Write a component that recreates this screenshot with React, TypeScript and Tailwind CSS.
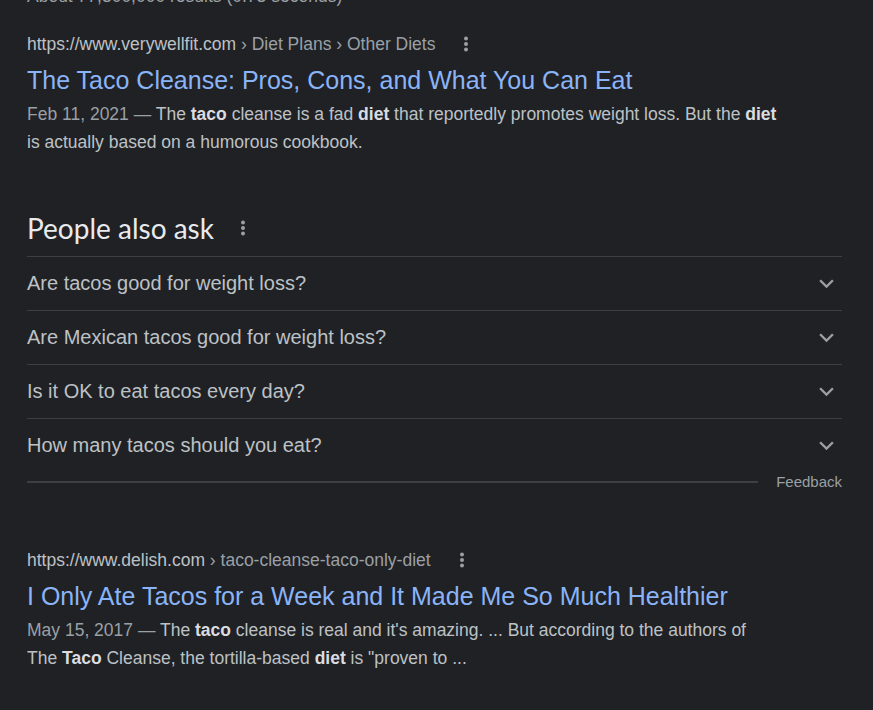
import type { ReactNode } from 'react'

const sans = { fontFamily: '"Liberation Sans", Arial, sans-serif' }

function MoreVert() {
	return (
		<svg width="6" height="16" viewBox="0 0 6 16" className="shrink-0 text-[#9aa0a6]" aria-hidden="true">
			<circle cx="3" cy="2.5" r="2" fill="currentColor" />
			<circle cx="3" cy="8" r="2" fill="currentColor" />
			<circle cx="3" cy="13.5" r="2" fill="currentColor" />
		</svg>
	)
}

function ExpandMore() {
	return (
		<svg width="29" height="29" viewBox="0 0 24 24" className="shrink-0 text-[#9aa0a6]" aria-hidden="true">
			<path fill="currentColor" d="M16.59 8.59L12 13.17 7.41 8.59 6 10l6 6 6-6z" />
		</svg>
	)
}

type ResultProps = {
	site: string
	crumbs: string
	title: string
	lines: ReactNode[]
}

function Result({ site, crumbs, title, lines }: ResultProps) {
	return (
		<div>
			<div className="flex h-[28px] items-center text-[17.5px] whitespace-nowrap">
				<span className="text-[#bdc1c6]">{site}</span>
				<span className="text-[#9aa0a6]">&nbsp;› {crumbs}</span>
				<span className="ml-[28px] flex items-center">
					<MoreVert />
				</span>
			</div>
			<h3 className="mt-[6px] h-[32px] text-[25px] leading-[32px] whitespace-nowrap text-[#8ab4f8]">
				{title}
			</h3>
			<div className="mt-[4px] text-[17.5px] leading-[28px] text-[#bdc1c6]">
				{lines.map((line, i) => (
					<div key={i} className="whitespace-nowrap">
						{line}
					</div>
				))}
			</div>
		</div>
	)
}

const B = ({ children }: { children: ReactNode }) => (
	<b className="font-bold text-[#dadce0]">{children}</b>
)

const questions = [
	'Are tacos good for weight loss?',
	'Are Mexican tacos good for weight loss?',
	'Is it OK to eat tacos every day?',
	'How many tacos should you eat?',
]

export default function App() {
	return (
		<div className="h-[710px] w-[873px] overflow-hidden bg-[#202124]" style={sans}>
			<div className="w-[815px] pl-[27px] box-content">
				<div className="-mt-[18px] h-[28px] text-[17.5px] leading-[28px] whitespace-nowrap text-[#9aa0a6]">
					About 77,300,000 results (0.73 seconds)
				</div>

				<div className="mt-[20px]">
					<Result
						site="https://www.verywellfit.com"
						crumbs="Diet Plans › Other Diets"
						title="The Taco Cleanse: Pros, Cons, and What You Can Eat"
						lines={[
							<>
								<span className="text-[#9aa0a6]">Feb 11, 2021 — </span>The <B>taco</B> cleanse is a fad{' '}
								<B>diet</B> that reportedly promotes weight loss. But the <B>diet</B>
							</>,
							<>is actually based on a humorous cookbook.</>,
						]}
					/>
				</div>

				<div className="mt-[52px]">
					<div className="flex h-[48px] items-start">
						<h2
							className="h-[40px] text-[28px] leading-[40px] text-[#e8eaed]"
							style={{ fontFamily: 'Lato, "Open Sans", sans-serif' }}
						>
							People also ask
						</h2>
						<span className="ml-[26px] flex h-[40px] items-center">
							<MoreVert />
						</span>
					</div>
					{questions.map((q) => (
						<div
							key={q}
							className="flex h-[54px] items-center justify-between border-t border-[#3c4043] text-[20px] text-[#bdc1c6]"
						>
							<span className="-mt-[1px]">{q}</span>
							<span className="mr-[1px]">
								<ExpandMore />
							</span>
						</div>
					))}
					<div className="flex h-[20px] items-center">
						<div className="h-[2px] flex-1 bg-[#3c4043]" />
						<span className="ml-[18px] text-[15px] text-[#9aa0a6]">Feedback</span>
					</div>
				</div>

				<div className="mt-[54px]">
					<Result
						site="https://www.delish.com"
						crumbs="taco-cleanse-taco-only-diet"
						title="I Only Ate Tacos for a Week and It Made Me So Much Healthier"
						lines={[
							<>
								<span className="text-[#9aa0a6]">May 15, 2017 — </span>The <B>taco</B> cleanse is real and
								it's amazing. ... But according to the authors of
							</>,
							<>
								The <B>Taco</B> Cleanse, the tortilla-based <B>diet</B> is "proven to ...
							</>,
						]}
					/>
				</div>
			</div>
		</div>
	)
}
